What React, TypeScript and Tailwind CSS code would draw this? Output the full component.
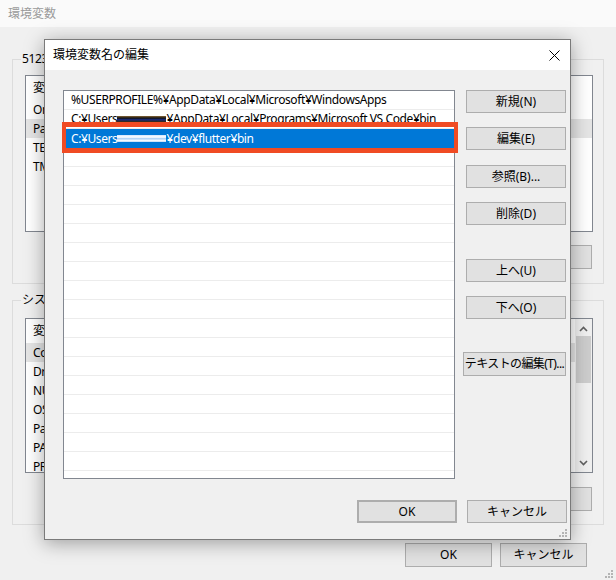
import React from 'react';

const userVars = ['OneDrive', 'Path', 'TEMP', 'TMP'];
const systemVars = ['ComSpec', 'DriverData', 'NUMBER_OF_PROCESSORS', 'OS', 'Path', 'PATHEXT', 'PROCESSOR_ARCHITECTURE'];

const Button = ({ children, className = '' }: { children: React.ReactNode; className?: string }) => (
  <div
    className={`flex items-center justify-center whitespace-nowrap border border-[#adadad] bg-[#e1e1e1] text-[12px] leading-none text-black ${className}`}
  >
    {children}
  </div>
);

const Smudge = ({ light }: { light?: boolean }) =>
  light ? (
    <span className="inline-block h-[7px] w-[49px] align-middle bg-[linear-gradient(to_bottom,#cfe3ff,#ffffff_30%,#9ec8f5_55%,#ffffff_75%,#bcd8f8)]" />
  ) : (
    <span className="inline-block h-[7px] w-[49px] align-middle bg-[linear-gradient(to_bottom,#8a6a3a,#111111_30%,#1b2f8a_55%,#222222_75%,#8a6a3a)]" />
  );

const Grip = () => (
  <svg width="9" height="9" viewBox="0 0 9 9">
    {[
      [7, 1],
      [4, 4],
      [7, 4],
      [1, 7],
      [4, 7],
      [7, 7],
    ].map(([x, y]) => (
      <rect key={`${x}-${y}`} x={x} y={y} width="2" height="2" fill="#b4b4b4" />
    ))}
  </svg>
);

const VarList = ({ items, selected, scroll, height }: { items: string[]; selected: number; scroll?: boolean; height: string }) => (
  <div className={`relative ml-[12px] mr-[10px] overflow-hidden border border-[#828790] bg-white tracking-[-0.4px] ${height}`}>
    <div className="flex h-[24px] items-center pl-[7px]">変数</div>
    {items.map((name, i) => (
      <div key={name} className={`flex h-[19px] items-center pl-[7px] ${i === selected ? 'bg-[#e5e5e5]' : ''}`}>
        {name}
      </div>
    ))}
    {scroll && (
      <div className="absolute right-0 top-0 flex h-full w-[17px] flex-col items-center bg-[#f0f0f0]">
        <svg width="9" height="6" viewBox="0 0 9 6" className="mt-[7px]">
          <path d="M1 5 L4.5 1.5 L8 5" fill="none" stroke="#606060" strokeWidth="1.6" />
        </svg>
        <div className="mt-[4px] h-[47px] w-[15px] bg-[#cdcdcd]" />
        <div className="flex-1" />
        <svg width="9" height="6" viewBox="0 0 9 6" className="mb-[6px]">
          <path d="M1 1 L4.5 4.5 L8 1" fill="none" stroke="#606060" strokeWidth="1.6" />
        </svg>
      </div>
    )}
  </div>
);

const App: React.FC = () => {
  return (
    <div className="relative h-[580px] w-[616px] overflow-hidden bg-[#f0f0f0] font-['Noto_Sans','Noto_Sans_CJK_JP',sans-serif] text-[12px] text-black">
      {/* background window: 環境変数 */}
      <div className="flex h-[27px] items-center bg-[#fafafa] pl-[8px] text-[#9a9a9a]">環境変数</div>
      <div className="px-[12px]">
        <fieldset className="mt-[24px] border border-[#dcdcdc] pb-[14px]">
          <legend className="ml-[8px] px-[1px] leading-[16px] tracking-[-0.4px]">5123 のユーザー環境変数(U)</legend>
          <div className="mt-[8px]">
            <VarList items={userVars} selected={1} height="h-[157px]" />
          </div>
          <div className="mr-[11px] mt-[13px] flex justify-end gap-[9px]">
            <Button className="h-[24px] w-[86px]">新規(N)...</Button>
            <Button className="h-[24px] w-[86px]">編集(E)...</Button>
            <Button className="h-[24px] w-[86px]">削除(D)</Button>
          </div>
        </fieldset>
        <fieldset className="mt-[8px] border border-[#dcdcdc] pb-[13px]">
          <legend className="ml-[8px] px-[1px] leading-[16px]">システム環境変数(S)</legend>
          <div className="mt-[10px]">
            <VarList items={systemVars} selected={0} scroll height="h-[155px]" />
          </div>
          <div className="mr-[11px] mt-[14px] flex justify-end gap-[9px]">
            <Button className="h-[24px] w-[86px]">新規(W)...</Button>
            <Button className="h-[24px] w-[86px]">編集(I)...</Button>
            <Button className="h-[24px] w-[86px]">削除(L)</Button>
          </div>
        </fieldset>
      </div>
      <div className="mt-[18px] flex justify-end gap-[8px] pr-[29px]">
        <Button className="h-[24px] w-[87px]">OK</Button>
        <Button className="h-[24px] w-[87px]">キャンセル</Button>
      </div>
      <div className="absolute bottom-[2px] right-[3px]">
        <Grip />
      </div>

      {/* dialog: 環境変数名の編集 */}
      <div className="absolute left-[44px] top-[39px] flex h-[501px] w-[527px] flex-col border border-[#7a7a7a] bg-[#f0f0f0] shadow-[0_3px_18px_rgba(0,0,0,0.35)]">
        <div className="flex h-[30px] items-center justify-between bg-white pl-[8px] pr-[10px]">
          <span>環境変数名の編集</span>
          <svg width="11" height="11" viewBox="0 0 11 11">
            <path d="M0.5 0.5 L10.5 10.5 M10.5 0.5 L0.5 10.5" stroke="#000" strokeWidth="1" />
          </svg>
        </div>
        <div className="flex pl-[18px] pt-[20px]">
          <div className="h-[389px] w-[392px] overflow-hidden border border-[#828790] bg-white tracking-[-0.4px]">
            <div className="flex h-[19px] items-center border-b border-[#ececec] pl-[7px] whitespace-nowrap">
              %USERPROFILE%¥AppData¥Local¥Microsoft¥WindowsApps
            </div>
            <div className="flex h-[19px] items-center border-b border-[#ececec] pl-[7px] whitespace-nowrap">
              C:¥Users
              <Smudge />
              ¥AppData¥Local¥Programs¥Microsoft VS Code¥bin
            </div>
            <div className="flex h-[19px] items-center bg-[#0078d7] pl-[7px] text-white whitespace-nowrap">
              C:¥Users
              <Smudge light />
              ¥dev¥flutter¥bin
            </div>
            {Array.from({ length: 18 }).map((_, i) => (
              <div key={i} className="h-[19px] border-b border-[#ececec]" />
            ))}
          </div>
          <div className="ml-[11px] flex w-[100px] flex-col">
            <Button className="h-[23px]">新規(N)</Button>
            <Button className="mt-[14px] h-[23px]">編集(E)</Button>
            <Button className="mt-[15px] h-[23px]">参照(B)...</Button>
            <Button className="mt-[14px] h-[23px]">削除(D)</Button>
            <Button className="mt-[34px] h-[23px]">上へ(U)</Button>
            <Button className="mt-[14px] h-[23px]">下へ(O)</Button>
            <Button className="ml-[-3px] mt-[33px] h-[24px] tracking-[-0.6px]">テキストの編集(T)...</Button>
          </div>
        </div>
        <div className="mt-[21px] flex justify-end gap-[10px] pr-[3px]">
          <Button className="h-[23px] w-[100px] border-2 border-[#0078d7]">OK</Button>
          <Button className="h-[23px] w-[100px]">キャンセル</Button>
        </div>
        <div className="absolute bottom-[2px] right-[3px]">
          <Grip />
        </div>
      </div>

      {/* red highlight annotation */}
      <div className="absolute left-[62px] top-[122px] h-[31px] w-[396px] border-x-4 border-y-[5px] border-[#f04b23]" />
    </div>
  );
};

export default App;
